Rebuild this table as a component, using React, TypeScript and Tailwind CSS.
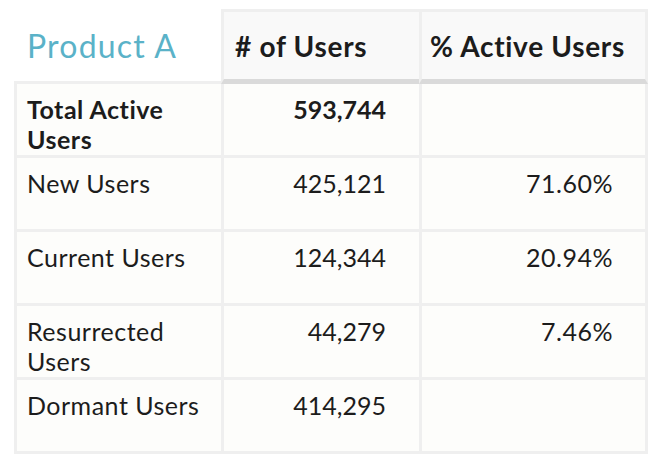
import React from "react";

const rows = [
  { label: "Total Active Users", users: "593,744", pct: "", bold: true },
  { label: "New Users", users: "425,121", pct: "71.60%" },
  { label: "Current Users", users: "124,344", pct: "20.94%" },
  { label: "Resurrected Users", users: "44,279", pct: "7.46%" },
  { label: "Dormant Users", users: "414,295", pct: "" },
];

export default function App() {
  return (
    <div className="w-[668px] h-[470px] bg-white" style={{ fontFamily: "Lato, 'Open Sans', sans-serif" }}>
      <div className="ml-[14px] pt-[9px] w-[634px]">
        <div className="relative z-10 flex h-[75px] -mb-[3px]">
          <div className="w-[207px] pl-[13px] pt-[17px] text-[32px] leading-[40px] tracking-[1.2px] text-[#5ab2c8]">Product A</div>
          <div className="w-[198px] bg-[#f9f9f9] border-t-[3px] border-l-[3px] border-[#efefef] border-b-[5px] border-b-[#dadada] pl-[11px] pt-[16px] text-[28px] leading-[36px] tracking-[0.7px] font-bold text-[#1c1c1c]">
            # of Users
          </div>
          <div className="w-[229px] bg-[#f9f9f9] border-t-[3px] border-x-[3px] border-[#efefef] border-b-[5px] border-b-[#dadada] pl-[8px] pt-[16px] text-[28px] leading-[36px] tracking-[0.7px] font-bold text-[#1c1c1c]">
            % Active Users
          </div>
        </div>
        <div className="grid grid-cols-[204px_195px_223px] auto-rows-[71px] gap-[3px] bg-[#efefef] p-[3px]">
          {rows.map((r) => (
            <React.Fragment key={r.label}>
              <div className={`bg-[#fdfdfb] pl-[10px] pr-[20px] pt-[10px] text-[25px] leading-[30px] tracking-[0.5px] text-[#1c1c1c] ${r.bold ? "font-bold" : ""}`}>
                {r.label}
              </div>
              <div className={`bg-[#fdfdfb] pr-[33px] pt-[10px] text-right text-[25px] leading-[30px] text-[#1c1c1c] ${r.bold ? "font-bold" : ""}`}>
                {r.users}
              </div>
              <div className="bg-[#fdfdfb] pr-[32px] pt-[10px] text-right text-[25px] leading-[30px] tracking-[0.5px] text-[#1c1c1c]">
                {r.pct}
              </div>
            </React.Fragment>
          ))}
        </div>
      </div>
    </div>
  );
}
